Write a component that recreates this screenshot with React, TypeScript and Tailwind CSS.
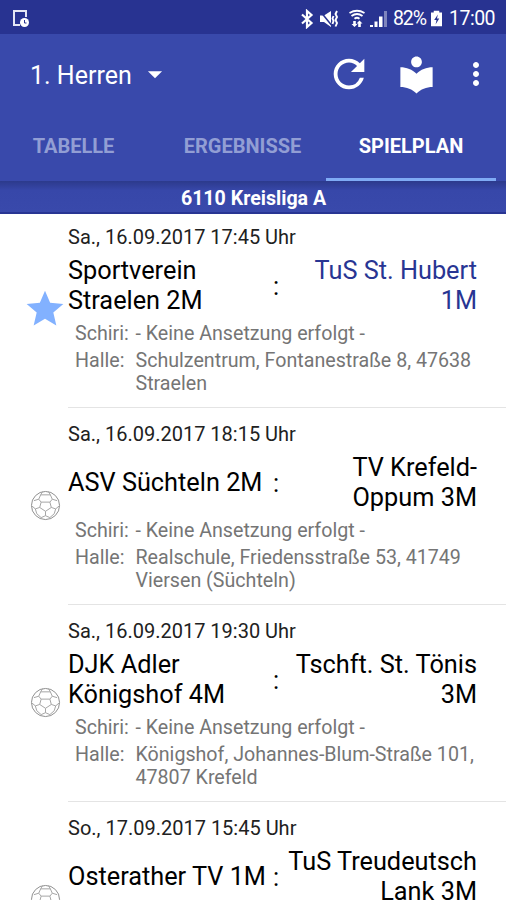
import { MdRefresh, MdLocalLibrary, MdMoreVert, MdStar, MdArrowDropDown } from "react-icons/md";

type Match = {
  date: string;
  home: string;
  away: string;
  hall?: string;
  favorite?: boolean;
};

const matches: Match[] = [
  {
    date: "Sa., 16.09.2017 17:45 Uhr",
    home: "Sportverein\nStraelen 2M",
    away: "TuS St. Hubert\n1M",
    hall: "Schulzentrum, Fontanestraße 8, 47638\nStraelen",
    favorite: true,
  },
  {
    date: "Sa., 16.09.2017 18:15 Uhr",
    home: "ASV Süchteln 2M",
    away: "TV Krefeld-\nOppum 3M",
    hall: "Realschule, Friedensstraße 53, 41749\nViersen (Süchteln)",
  },
  {
    date: "Sa., 16.09.2017 19:30 Uhr",
    home: "DJK Adler\nKönigshof 4M",
    away: "Tschft. St. Tönis\n3M",
    hall: "Königshof, Johannes-Blum-Straße 101,\n47807 Krefeld",
  },
  {
    date: "So., 17.09.2017 15:45 Uhr",
    home: "Osterather TV 1M",
    away: "TuS Treudeutsch\nLank 3M",
  },
];

function BallIcon() {
  return (
    <svg viewBox="0 0 32 32" className="size-[31px]" fill="none" stroke="#a3a3a3" strokeWidth="1">
      <circle cx="16" cy="16" r="14.5" stroke="#8c8c8c" />
      <path d="M11.500 12.500h9l1.500 5.500-6 4-6-4z" />
      <path d="M11.500 12.500L9 9.500M20.500 12.500L23 9.500M22 18l4.500 1.500M10 18l-4.500 1.500M16 22v4.500" />
      <path d="M9 9.500L11 5h10l2 4.500 5 1.500M9 9.500L4 11M5.500 19.500l-3.500-3M26.500 19.500l3.500-3M5.500 19.500l1.500 5 4.500 4 4.500-2 4.500 2 4.500-4 1.500-5M11 5l2-3.500M21 5l-2-3.500" />
    </svg>
  );
}

function StatusBar() {
  return (
    <div className="flex h-[34px] shrink-0 items-center bg-[#283391] pt-[3px] text-white">
      <svg viewBox="0 0 20 20" className="ml-3 h-[20px] w-[20px]" fill="none" stroke="#e4e6f5" strokeWidth="2">
        <path d="M14 8V2H2v14h6" />
        <circle cx="12.500" cy="13.500" r="4.500" fill="#fff" stroke="none" />
        <path d="M12.500 11v3h2" stroke="#283391" strokeWidth="1" />
      </svg>
      <svg viewBox="0 0 14 20" className="ml-auto h-[20px] w-[14px] shrink-0" fill="none" stroke="#fff" strokeWidth="2.200">
        <path d="M2 5.500l9.500 8.500-4.500 4V2l4.500 4L2 14.500" />
      </svg>
      {/* muted, vibrating */}
      <svg viewBox="0 0 20 20" className="ml-[5px] size-[20px] shrink-0" fill="#fff">
        <path d="M1 6.500h4l7-4.500v16l-7-5H1z" />
        <path d="M1 2l13 16" stroke="#283391" strokeWidth="1.500" />
        <path d="M14.500 7l-1 2.500 1 2.500-1 3M18 2l-1.500 3L18 8l-1.500 3L18 14l-1.500 3.500" fill="none" stroke="#fff" strokeWidth="1.900" />
      </svg>
      {/* wifi with transfer arrows */}
      <svg viewBox="0 0 20 20" className="ml-[8px] size-[20px] shrink-0" fill="none" stroke="#fff" strokeWidth="1.800">
        <path d="M2.500 4c5-3 10-3 15 0M4.500 7c3.500-2.600 7.500-2.600 11 0M7.500 9.800c1.500-1.200 3.500-1.200 5 0" />
        <path d="M7.500 18l-3-3h1.700v-3h2.600v3h1.700zM12.500 11.500l3 3h-1.700v3.500h-2.600v-3.500H9.500z" fill="#fff" stroke="none" />
      </svg>
      <svg viewBox="0 0 20 20" className="ml-[2px] size-[20px] shrink-0" fill="#fff">
        <path d="M1 16h3v2H1zM5.500 12.500H8.500V18h-3zM10 7.500h3.500V18H10z" />
        <path d="M15 2H18v16h-3z" opacity="0.4" />
      </svg>
      <span className="ml-[4px] w-[35px] text-[19.500px] tracking-[-1.100px] whitespace-nowrap">82%</span>
      <svg viewBox="0 0 12 18" className="ml-[3px] h-[18px] w-[11px] shrink-0">
        <path d="M3 0h6v2h3v15H0V2h3z" fill="#fff" />
        <path d="M7.500 4L3.500 10h2.500l-1 5 4-6.500H6.500z" fill="#283391" />
      </svg>
      <span className="mr-[10px] ml-[7px] w-[47px] text-[19.500px] tracking-[-0.500px] whitespace-nowrap">17:00</span>
    </div>
  );
}

function Toolbar() {
  return (
    <div className="flex h-[80px] items-center text-white">
      <span className="ml-[30px] w-[102px] pt-[3px] text-[25px] whitespace-nowrap">1. Herren</span>
      <MdArrowDropDown className="ml-[6px] size-[34px]" />
      <MdRefresh className="ml-auto size-[46px]" />
      <MdLocalLibrary className="ml-[23px] size-[43px]" />
      <MdMoreVert className="mr-[12px] ml-[20px] size-[36px]" />
    </div>
  );
}

function Tabs() {
  return (
    <div className="flex h-[67px] text-[20px] font-bold text-[#929ed4]">
      <div className="flex w-[147px] items-center justify-center pb-[3px]">TABELLE</div>
      <div className="flex w-[179px] items-center justify-center pb-[3px] pl-[12px]">ERGEBNISSE</div>
      <div className="flex w-[170px] items-center justify-center border-b-[3px] border-[#7fabf5] text-white">
        SPIELPLAN
      </div>
    </div>
  );
}

function MatchRow({ match }: { match: Match }) {
  return (
    <div className="flex h-[197px] shrink-0">
      <div className="flex w-[68px] shrink-0 justify-center pt-[79px] pl-[22px]">
        {match.favorite ? (
          <MdStar className="-mt-[3px] size-[44px] shrink-0 text-[#82b1ff]" />
        ) : (
          <div className="pt-[3px]">
            <BallIcon />
          </div>
        )}
      </div>
      <div className="flex-1 border-b border-[#e4e4e4] pt-[14px]">
        <p className="h-[30px] text-[20px] leading-6 text-[#212121]">{match.date}</p>
        <div className="flex h-[61px] items-center text-[25.300px] leading-[29.500px] text-black">
          <p className="w-[205px] whitespace-pre">{match.home}</p>
          <span className="w-[7px] pt-[3px]">:</span>
          <p
            className={
              match.favorite
                ? "flex-1 pr-[29px] text-right whitespace-pre text-[#283593]"
                : "flex-1 pr-[29px] text-right whitespace-pre"
            }
          >
            {match.away}
          </p>
        </div>
        {match.hall && (
          <div className="grid grid-cols-[60.500px_1fr] gap-y-[4px] pt-[6px] pl-[7px] text-[19.650px] leading-[23px] whitespace-pre text-[#757575]">
            <span>Schiri:</span>
            <span>- Keine Ansetzung erfolgt -</span>
            <span>Halle:</span>
            <span>{match.hall}</span>
          </div>
        )}
      </div>
    </div>
  );
}

export default function App() {
  return (
    <main className="flex h-[900px] w-[506px] flex-col overflow-hidden bg-white font-['Roboto',sans-serif]">
      <StatusBar />
      <header className="shrink-0 bg-[#3949ab]">
        <Toolbar />
        <Tabs />
      </header>

      {/* LEAGUE */}
      <div className="flex h-[33px] shrink-0 items-center justify-center border-b-2 border-[#283593] bg-linear-to-b from-[#2c3a8c] via-[#3747a9] via-30% to-[#3949ab] pt-[4px] pl-[1px] text-[19.600px] font-bold text-white">
        6110 Kreisliga A
      </div>

      {/* SCHEDULE */}
      <div className="-mt-[3px] flex flex-col">
        {matches.map((match) => (
          <MatchRow key={match.date} match={match} />
        ))}
      </div>
    </main>
  );
}
